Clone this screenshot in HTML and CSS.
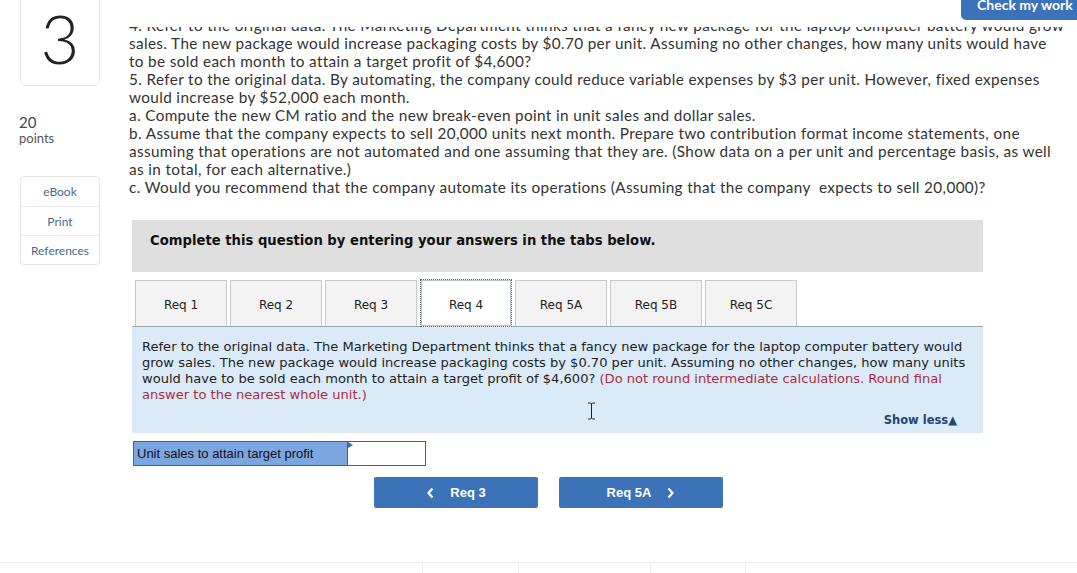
FILE: index.html
```html
<!DOCTYPE html>
<html>
<head>
<meta charset="utf-8">
<title>Question 3</title>
<link rel="stylesheet" href="styles.css">
</head>
<body>
<div class="check-btn">Check my work</div>
<div class="page">
  <aside class="side">
    <div class="qnum">3</div>
    <div class="pts">
      <div class="pts-n">20</div>
      <div class="pts-l">points</div>
    </div>
    <div class="tools">
      <div class="tool">eBook</div>
      <div class="tool">Print</div>
      <div class="tool">References</div>
    </div>
  </aside>
  <main class="main">
    <div class="qclip">
      <p class="qtext">4. Refer to the original data. The Marketing Department thinks that a fancy new package for the laptop computer battery would grow<br>sales. The new package would increase packaging costs by $0.70 per unit. Assuming no other changes, how many units would have<br>to be sold each month to attain a target profit of $4,600?<br>5. Refer to the original data. By automating, the company could reduce variable expenses by $3 per unit. However, fixed expenses<br>would increase by $52,000 each month.<br>a. Compute the new CM ratio and the new break-even point in unit sales and dollar sales.<br>b. Assume that the company expects to sell 20,000 units next month. Prepare two contribution format income statements, one<br>assuming that operations are not automated and one assuming that they are. (Show data on a per unit and percentage basis, as well<br>as in total, for each alternative.)<br>c. Would you recommend that the company automate its operations (Assuming that the company&nbsp; expects to sell 20,000)?</p>
    </div>
    <div class="instr">Complete this question by entering your answers in the tabs below.</div>
    <div class="tabs">
      <div class="tab">Req 1</div>
      <div class="tab">Req 2</div>
      <div class="tab">Req 3</div>
      <div class="tab active">Req 4</div>
      <div class="tab">Req 5A</div>
      <div class="tab">Req 5B</div>
      <div class="tab">Req 5C</div>
    </div>
    <div class="panel">
      <p class="ptext">Refer to the original data. The Marketing Department thinks that a fancy new package for the laptop computer battery would<br>grow sales. The new package would increase packaging costs by $0.70 per unit. Assuming no other changes, how many units<br>would have to be sold each month to attain a target profit of $4,600? <span class="red">(Do not round intermediate calculations. Round final<br>answer to the nearest whole unit.)</span></p>
      <div class="showless">Show less&#9650;</div>
      <svg class="ibeam" width="9" height="18" viewBox="0 0 9 18"><path d="M1 1h2.5l1 1 1-1H8M4.5 2v14M1 17h2.5l1-1 1 1H8" fill="none" stroke="#222" stroke-width="1"/></svg>
    </div>
    <div class="answer">
      <div class="alabel">Unit sales to attain target profit</div>
      <div class="ainput"><span class="corner"></span></div>
    </div>
    <div class="nav">
      <div class="nbtn"><svg width="9" height="12" viewBox="0 0 9 12"><path d="M6.5 1.5 2.5 6l4 4.5" fill="none" stroke="#fff" stroke-width="2.2"/></svg><span>Req 3</span></div>
      <div class="nbtn"><span>Req 5A</span><svg width="9" height="12" viewBox="0 0 9 12"><path d="M2.5 1.5 6.5 6l-4 4.5" fill="none" stroke="#fff" stroke-width="2.2"/></svg></div>
    </div>
  </main>
</div>
<div class="footer">
  <span class="tick t1"></span><span class="tick t2"></span><span class="tick t3"></span><span class="tick t4"></span>
</div>
</body>
</html>
```

FILE: styles.css
```css
html, body {
  margin: 0;
  padding: 0;
  background: #fff;
}
body {
  width: 1077px;
  height: 573px;
  overflow: hidden;
  position: relative;
  font-family: "Lato", "Liberation Sans", sans-serif;
  color: #333;
}
.check-btn {
  position: absolute;
  top: 0;
  right: 0;
  width: 100px;
  height: 20px;
  padding-left: 16px;
  background: #3b72b9;
  border-bottom-left-radius: 5px;
  color: #fff;
  font-weight: 700;
  font-size: 14px;
  line-height: 10px;
  white-space: nowrap;
  overflow: hidden;
}
.page {
  display: flex;
}
.side {
  width: 109px;
  padding-left: 20px;
  flex: none;
}
.qnum {
  width: 80px;
  height: 96px;
  margin-top: -10px;
  box-sizing: border-box;
  border: 1px solid #e6e6e6;
  border-radius: 6px;
  display: flex;
  align-items: center;
  justify-content: center;
  font-size: 67px;
  font-weight: 300;
  line-height: 1;
  color: #222;
}
.pts {
  margin-top: 27px;
  margin-left: -1px;
}
.pts-n {
  font-size: 15px;
  line-height: 18px;
  color: #3a4a5a;
}
.pts-l {
  font-size: 13px;
  line-height: 14px;
  color: #555;
}
.tools {
  margin-top: 31px;
  width: 80px;
  box-sizing: border-box;
  border: 1px solid #e6e6e6;
  border-radius: 4px;
}
.tool {
  height: 28px;
  display: flex;
  align-items: center;
  justify-content: center;
  font-size: 12px;
  color: #4a6a8c;
  border-top: 1px solid #e9e9e9;
}
.tool:first-child {
  border-top: none;
  height: 29px;
}
.main {
  flex: 1;
}
.qclip {
  margin-top: 27px;
  overflow: hidden;
}
.qtext {
  margin: -11px 0 0;
  font-size: 15.3px;
  letter-spacing: 0.36px;
  line-height: 18px;
  color: #333;
  white-space: nowrap;
}
.instr {
  margin: 24px 0 0 3px;
  width: 833px;
  height: 39px;
  padding: 13px 0 0 18px;
  background: #dfdfdf;
  font-family: "DejaVu Sans", Verdana, sans-serif;
  font-weight: 700;
  font-size: 13.2px;
  line-height: 16px;
  color: #111;
}
.tabs {
  margin: 8px 0 0 3px;
  padding-left: 3px;
  display: flex;
  gap: 3px;
  position: relative;
  z-index: 1;
}
.tab {
  width: 92px;
  height: 46px;
  padding-top: 3px;
  box-sizing: border-box;
  border: 1px solid #c9c9c9;
  border-bottom: none;
  background: #f3f3f3;
  display: flex;
  align-items: center;
  justify-content: center;
  font-family: "DejaVu Sans", Verdana, sans-serif;
  font-size: 12px;
  color: #222;
}
.tab.active {
  background: #fff;
  border: 1px dotted #4d5d6e;
  height: 48px;
  padding-top: 4px;
  margin-top: -1px;
  margin-bottom: -1px;
  box-shadow: inset 0 0 0 1px #b8c2cc;
}
.panel {
  position: relative;
  margin-left: 3px;
  width: 815px;
  height: 94px;
  padding: 12px 26px 0 10px;
  border-top: 1px solid #9aa6b2;
  background: #daeaf8;
}
.ptext {
  margin: 0;
  font-family: "DejaVu Sans", Verdana, sans-serif;
  font-size: 13.05px;
  line-height: 16px;
  color: #222;
  white-space: nowrap;
}
.red {
  color: #a8303e;
}
.showless {
  margin-top: 9px;
  text-align: right;
  font-family: "DejaVu Sans", Verdana, sans-serif;
  font-weight: 700;
  font-size: 11.5px;
  line-height: 16px;
  color: #25476b;
}
.ibeam {
  position: absolute;
  left: 455px;
  top: 75px;
}
.answer {
  margin: 8px 0 0 4px;
  display: flex;
  height: 25px;
}
.alabel {
  width: 215px;
  box-sizing: border-box;
  border: 1px solid #5d5d5d;
  background: #7ba6e0;
  padding-left: 3px;
  display: flex;
  align-items: center;
  font-family: "Liberation Sans", Arial, sans-serif;
  font-size: 13px;
  color: #111;
}
.ainput {
  position: relative;
  width: 78px;
  box-sizing: border-box;
  border: 1px solid #5d5d5d;
  border-left: none;
  background: #fff;
}
.corner {
  position: absolute;
  left: 0;
  top: 0;
  width: 0;
  height: 0;
  border-top: 3px solid transparent;
  border-bottom: 3px solid transparent;
  border-left: 5px solid #3c6da8;
}
.nav {
  margin: 11px 0 0 245px;
  display: flex;
  gap: 21px;
}
.nbtn {
  width: 164px;
  height: 31px;
  background: #3c73b8;
  border-radius: 2px;
  display: flex;
  align-items: center;
  justify-content: center;
  gap: 15px;
  font-family: "Liberation Sans", Arial, sans-serif;
  font-weight: 700;
  font-size: 13px;
  color: #fff;
}
.footer {
  position: absolute;
  left: 0;
  right: 0;
  top: 562px;
  height: 11px;
  border-top: 1px solid #eeeeee;
  display: flex;
}
.tick {
  width: 1px;
  height: 11px;
  background: #ececec;
}
.t1 { margin-left: 422px; }
.t2 { margin-left: 95px; }
.t3 { margin-left: 131px; }
.t4 { margin-left: 94px; }
```
